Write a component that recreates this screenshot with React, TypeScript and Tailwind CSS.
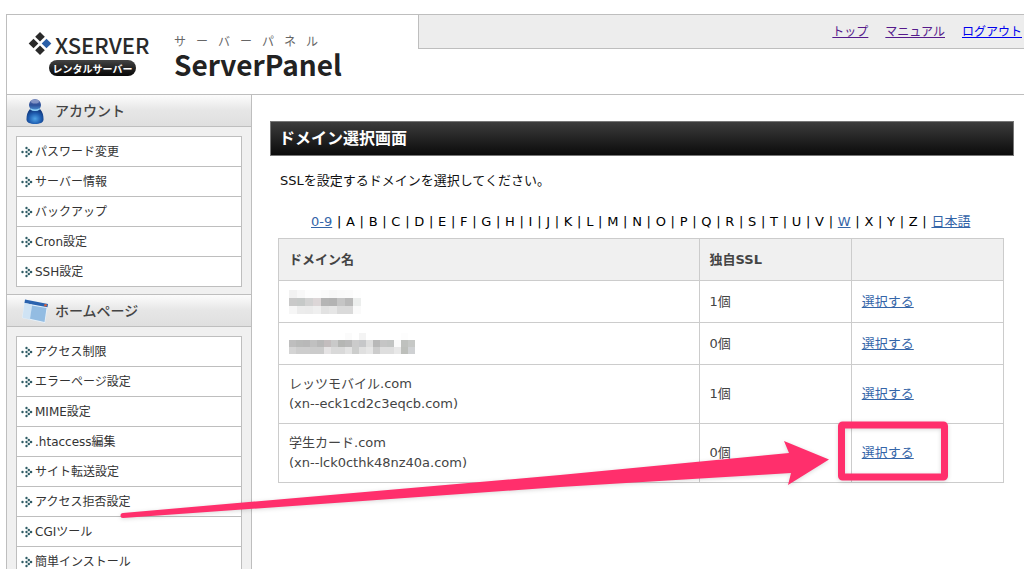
import React from 'react';

const accountMenu = ['パスワード変更', 'サーバー情報', 'バックアップ', 'Cron設定', 'SSH設定'];

const homepageMenu = [
  'アクセス制限',
  'エラーページ設定',
  'MIME設定',
  '.htaccess編集',
  'サイト転送設定',
  'アクセス拒否設定',
  'CGIツール',
  '簡単インストール',
];

const letters = ['0-9', ...'ABCDEFGHIJKLMNOPQRSTUVWXYZ'.split(''), '日本語'];
const linkedLetters = ['0-9', 'W', '日本語'];

const UserIcon = () => (
  <svg width="22" height="28" viewBox="0 0 22 28" aria-hidden="true">
    <defs>
      <radialGradient id="user-body" cx="50%" cy="65%" r="60%">
        <stop offset="0" stopColor="#4fa3e6" />
        <stop offset="0.6" stopColor="#1f5db0" />
        <stop offset="1" stopColor="#123a80" />
      </radialGradient>
      <linearGradient id="user-head" x1="0" y1="0" x2="0" y2="1">
        <stop offset="0" stopColor="#6377b4" />
        <stop offset="0.5" stopColor="#2c4f98" />
        <stop offset="1" stopColor="#4f9bdc" />
      </linearGradient>
    </defs>
    <path d="M6 12C3 15 2.500 19 2.500 22.500C2.500 25.500 6 27 11 27C16 27 19.500 25.500 19.500 22.500C19.500 19 19 15 16 12Z" fill="url(#user-body)" />
    <ellipse cx="11" cy="8" rx="6" ry="6" fill="url(#user-head)" />
    <ellipse cx="11" cy="4.500" rx="4" ry="2" fill="#9aa8d2" opacity="0.7" />
    <path d="M6 12.500Q11 15.500 16 12.500L15 11.500Q11 13.500 7 11.500Z" fill="#8fd0f5" />
  </svg>
);

const WindowIcon = () => (
  <svg width="28" height="26" viewBox="0 0 28 26" aria-hidden="true">
    <path d="M4 1.500L27 6L24 25L1 20Z" fill="#e6f1fa" />
    <path d="M4 1.500L27 6L26.500 9.200L3.500 5Z" fill="#2a62ae" />
    <path d="M3.500 5L11 6.500L9 21.500L1.500 19.800Z" fill="#cfe3f4" />
    <path d="M11 7.500L25.500 10L23.500 24L9 20.800Z" fill="#93bce2" />
    <circle cx="24.500" cy="7.200" r="1.300" fill="#d9603b" />
  </svg>
);

const MenuArrow = () => (
  <svg width="12" height="12" viewBox="0 0 12 12" fill="#2f5d66" aria-hidden="true">
    <circle cx="1.500" cy="6" r="1.200" />
    <circle cx="5.500" cy="2" r="1.200" />
    <circle cx="7.800" cy="4" r="1.200" />
    <circle cx="10" cy="6" r="1.300" />
    <circle cx="7.800" cy="8" r="1.200" />
    <circle cx="5.500" cy="10" r="1.200" />
    <circle cx="5.500" cy="6" r="1.200" />
  </svg>
);

const LogoMark = () => (
  <svg width="24" height="24" viewBox="0 0 24 24" fill="#2a2a2a" aria-hidden="true">
    <path d="M12 0L16.800 4.800L12 9.600L7.200 4.800Z" />
    <path d="M5.500 6.700L10.300 11.500L5.500 16.300L0.700 11.500Z" />
    <path d="M12 13.400L16.800 18.200L12 23L7.200 18.200Z" />
    <path d="M18.500 6.700L23.300 11.500L18.500 16.300L13.700 11.500Z" fill="#2a5fa8" />
  </svg>
);

interface MosaicProps {
  label: string;
  size: number;
  rows: string[][];
}

// Masked domain name, one square per colour
const Mosaic: React.FC<MosaicProps> = ({ label, size, rows }) => (
  <span className="flex h-5 items-center">
    <svg
      role="img"
      aria-label={label}
      className="block shrink-0"
      width={rows[0].length * size}
      height={rows.length * size}
      shapeRendering="crispEdges"
    >
      {rows.map((row, y) =>
        row.map((fill, x) => (
          <rect key={`${x}-${y}`} x={x * size} y={y * size} width={size} height={size} fill={fill} />
        ))
      )}
    </svg>
  </span>
);

const maskA = [
  ['#f2f2f2', '#f8f8f8', '#fdfdfd', '#fdfdfd', '#fbfbfb', '#f8f8f8', '#fafafa', '#fbfbfb', '#fefefe'],
  ['#c9c9c9', '#c6c9c8', '#d2d2d2', '#dcd6d7', '#b5b5b5', '#b3b3b3', '#c5c5c5', '#b9b9b9', '#eceeed'],
  ['#f6f6f6', '#ececec', '#ebebeb', '#efefef', '#e2e2e2', '#e6e6e6', '#dadada', '#dadada', '#fafafa'],
];

const maskB = [
  ['#ffffff', '#ffffff', '#ffffff', '#ffffff', '#ffffff', '#ffffff', '#ffffff', '#ffffff', '#fbfbfb', '#ffffff', '#f4f4f4', '#ffffff', '#ffffff', '#ffffff', '#ffffff', '#ffffff', '#fdfdfd', '#ffffff'],
  ['#bebebe', '#b9bab9', '#b8b8b8', '#c0c0c0', '#b8b8b8', '#c3bdbe', '#c9c9c9', '#b5b6b4', '#b9b9b9', '#cbcbcb', '#c6c7c9', '#dddddd', '#b8b8b8', '#c5c5c5', '#c2c4c3', '#fafafa', '#bfc1be', '#c6c8c6'],
  ['#d4d4d4', '#cdcdcd', '#cdcdcd', '#cbcbcb', '#cbcbcb', '#e5e3e4', '#d9d9d9', '#d9d9d9', '#e3e3e3', '#cccdcc', '#e0e0e0', '#e6e6e6', '#cccccc', '#dedede', '#dedede', '#e8e8e8', '#bdbfbb', '#cfd1d3'],
];

interface Domain {
  name: React.ReactNode;
  count: number;
}

const domains: Domain[] = [
  { name: <Mosaic label="domain 1" size={8} rows={maskA} />, count: 1 },
  { name: <Mosaic label="domain 2" size={7} rows={maskB} />, count: 0 },
  { name: <>レッツモバイル.com<br />(xn--eck1cd2c3eqcb.com)</>, count: 1 },
  { name: <>学生カード.com<br />(xn--lck0cthk48nz40a.com)</>, count: 0 },
];

interface MenuSectionProps {
  title: string;
  icon: React.ReactNode;
  items: string[];
}

const MenuSection: React.FC<MenuSectionProps> = ({ title, icon, items }) => (
  <section>
    <h2 className="flex h-8 items-center border-b border-[#bebebe] bg-linear-to-b from-[#fcfcfc] via-[#e6e6e6] to-[#dfdfdf] pl-3 text-sm font-medium text-[#444]">
      <span className="flex w-9 justify-center pr-1">{icon}</span>
      {title}
    </h2>
    <div className="border-b border-[#bebebe] px-[9px] pt-[9px] pb-[7px]">
      <ul className="border-x border-t border-[#bebebe] bg-white">
        {items.map((item) => (
          <li key={item} className="h-[30px] border-b border-[#bebebe] pl-1">
            <a href="#" className="flex h-full items-center gap-[2px] text-xs text-[#333]">
              <MenuArrow />
              {item}
            </a>
          </li>
        ))}
      </ul>
    </div>
  </section>
);

const Header = () => (
  <header className="flex h-20 border-b border-[#bebebe]">
    <div className="flex w-[411px] shrink-0 pl-[21px] font-['Noto_Sans_CJK_JP',sans-serif]">
      <div className="flex w-[146px] flex-col pt-[17px]">
        <div className="flex items-center gap-[3px]">
          <LogoMark />
          <span className="text-[22px] leading-6 font-medium text-[#2a2a2a]">XSERVER</span>
        </div>
        <span className="mt-1 ml-[21px] flex h-4 w-[87px] items-center justify-center rounded-full bg-linear-to-b from-[#444] to-[#080808] text-[10px] font-bold text-white">
          レンタルサーバー
        </span>
      </div>
      <div className="pt-[18px] text-[#222]">
        <div className="flex gap-[10px] text-xs leading-4 text-[#666]">
          {'サーバーパネル'.split('').map((char, i) => (
            <span key={i}>{char}</span>
          ))}
        </div>
        <h1 className="text-[28px] leading-[30px] font-bold">ServerPanel</h1>
      </div>
    </div>
    <nav className="flex h-[34px] flex-1 items-center justify-end gap-[17px] border-b border-l border-[#bebebe] bg-[#ededed] pr-[2px] text-xs">
      <a href="#" className="text-[#551a8b] underline">トップ</a>
      <a href="#" className="text-[#551a8b] underline">マニュアル</a>
      <a href="#" className="text-[#0000ee] underline">ログアウト</a>
    </nav>
  </header>
);

const LetterIndex = () => (
  <div className="mt-[21px] flex justify-between px-[33px] text-[13px] leading-5 text-black">
    {letters.map((letter, i) => (
      <React.Fragment key={letter}>
        {i > 0 && <span>|</span>}
        {linkedLetters.includes(letter) ? (
          <a href="#" className="text-[#3465a8] underline">{letter}</a>
        ) : (
          <span>{letter}</span>
        )}
      </React.Fragment>
    ))}
  </div>
);

const DomainTable = () => (
  <table className="mt-[6px] w-full table-fixed border-collapse text-left text-[13px] leading-5 text-[#444]">
    <thead>
      <tr className="h-[42px] bg-[#f0f0f0]">
        <th className="w-[58%] border border-[#ccc] px-[10px]">ドメイン名</th>
        <th className="w-[21%] border border-[#ccc] px-[10px]">独自SSL</th>
        <th className="w-[21%] border border-[#ccc] px-[10px]"></th>
      </tr>
    </thead>
    <tbody>
      {domains.map((domain, i) => (
        <tr key={i} className="h-[42px]">
          <td className="border border-[#ccc] px-[10px] py-[9px]">{domain.name}</td>
          <td className="border border-[#ccc] px-[10px]">{domain.count}個</td>
          <td className="border border-[#ccc] px-[10px]">
            <a href="#" className="text-[#3465a8] underline">選択する</a>
          </td>
        </tr>
      ))}
    </tbody>
  </table>
);

// Arrow and frame drawn over the page, pointing at the last row
const Callout = () => (
  <svg
    className="pointer-events-none absolute top-0 left-0 drop-shadow-sm"
    width="1024"
    height="569"
    viewBox="0 0 1024 569"
    aria-hidden="true"
  >
    <path d="M123 513L560 475L789 453L784 441L829 459.500L788 485L791 473L560 487L123 518A2.500 2.500 0 0 1 123 513Z" fill="#ff2f6c" />
    <rect x="841.500" y="425" width="103" height="52" rx="1" fill="none" stroke="#ff2f6c" strokeWidth="7" strokeLinejoin="round" />
  </svg>
);

const App: React.FC = () => {
  return (
    <div className="relative h-screen overflow-hidden bg-white pt-[14px] pl-[6px] font-['DejaVu_Sans','Noto_Sans_CJK_JP',sans-serif]">
      <div className="border-t border-l border-[#bebebe]">
        <Header />
        <div className="flex">
          <aside className="w-[245px] shrink-0 border-r border-[#bebebe] bg-[#f0f0f0]">
            <MenuSection title="アカウント" icon={<UserIcon />} items={accountMenu} />
            <MenuSection title="ホームページ" icon={<WindowIcon />} items={homepageMenu} />
          </aside>
          <main className="min-w-0 flex-1 pt-[26px] pr-[10px] pl-[18px]">
            <h2 className="flex h-[35px] items-center border border-[#777] bg-linear-to-b from-[#3d3d3d] to-[#0c0c0c] pl-2 text-base font-bold text-white">
              ドメイン選択画面
            </h2>
            <div className="pr-[10px] pl-2">
              <p className="mt-[15px] pl-[2px] text-[13px] leading-5 text-[#111]">
                SSLを設定するドメインを選択してください。
              </p>
              <LetterIndex />
              <DomainTable />
            </div>
          </main>
        </div>
      </div>
      <Callout />
    </div>
  );
};

export default App;
